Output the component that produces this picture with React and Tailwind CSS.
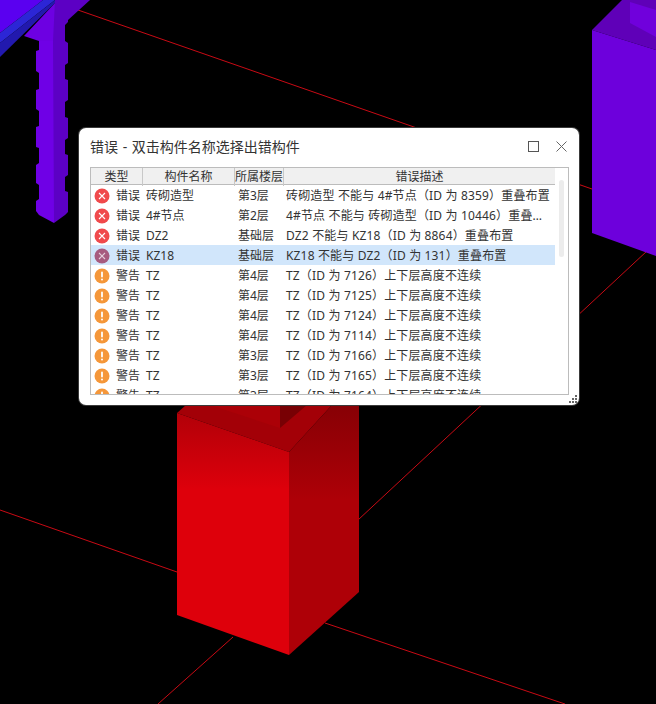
const FONT = "font-['Noto_Sans','Noto_Sans_CJK_SC',sans-serif]"

const rows = [
  { type: 'err', name: '砖砌造型', floor: '第3层', desc: '砖砌造型 不能与 4#节点（ID 为 8359）重叠布置' },
  { type: 'err', name: '4#节点', floor: '第2层', desc: '4#节点 不能与 砖砌造型（ID 为 10446）重叠布置' },
  { type: 'err', name: 'DZ2', floor: '基础层', desc: 'DZ2 不能与 KZ18（ID 为 8864）重叠布置' },
  { type: 'err', name: 'KZ18', floor: '基础层', desc: 'KZ18 不能与 DZ2（ID 为 131）重叠布置', selected: true },
  { type: 'warn', name: 'TZ', floor: '第4层', desc: 'TZ（ID 为 7126）上下层高度不连续' },
  { type: 'warn', name: 'TZ', floor: '第4层', desc: 'TZ（ID 为 7125）上下层高度不连续' },
  { type: 'warn', name: 'TZ', floor: '第4层', desc: 'TZ（ID 为 7124）上下层高度不连续' },
  { type: 'warn', name: 'TZ', floor: '第4层', desc: 'TZ（ID 为 7114）上下层高度不连续' },
  { type: 'warn', name: 'TZ', floor: '第3层', desc: 'TZ（ID 为 7166）上下层高度不连续' },
  { type: 'warn', name: 'TZ', floor: '第3层', desc: 'TZ（ID 为 7165）上下层高度不连续' },
  { type: 'warn', name: 'TZ', floor: '第3层', desc: 'TZ（ID 为 7164）上下层高度不连续' },
]

function Scene() {
  return (
    <svg className="absolute inset-0" width="656" height="704" viewBox="0 0 656 704">
      <defs>
        <linearGradient id="front" x1="0" y1="405" x2="0" y2="490" gradientUnits="userSpaceOnUse">
          <stop offset="0" stopColor="#ad0008" />
          <stop offset="1" stopColor="#de000b" />
        </linearGradient>
        <linearGradient id="side" x1="0" y1="405" x2="0" y2="500" gradientUnits="userSpaceOnUse">
          <stop offset="0" stopColor="#870005" />
          <stop offset="1" stopColor="#ae0007" />
        </linearGradient>
      </defs>

      {/* axis lines */}
      <g stroke="#c80a14" strokeWidth="1" fill="none">
        <line x1="78" y1="10" x2="592" y2="189" />
        <line x1="0" y1="510" x2="177" y2="572" />
        <line x1="325" y1="623" x2="565" y2="704" />
        <line x1="158" y1="704" x2="233" y2="637" />
        <line x1="358" y1="520" x2="647" y2="251" />
      </g>

      {/* left column and beam */}
      <polygon points="0,0 43,0 0,33" fill="#5a00f0" />
      <polygon points="43,0 55,0 55,0 0,43 0,33" fill="#2c26d6" />
      <polygon points="55,0 55,3 0,57 0,43" fill="#2219ae" />
      <polygon points="55,3 55,60 39,41 24,36" fill="#6d00e2" />
      <polygon
        points="39,41 39,50 36,51 36,71 39,73 39,89 36,90 36,109 39,111 39,126 36,127 36,147 39,148 39,163 36,165 36,183 39,185 39,199 36,201 36,211 39,215 54,223 54,41"
        fill="#6f00e6"
      />
      <polygon
        points="55,0 90,0 68,20 68,22 65,25 65,41 68,43 68,63 65,65 65,79 68,80 68,100 65,102 65,117 68,118 68,138 65,140 65,154 68,155 68,175 65,177 65,191 68,192 68,212 65,215 54,223 53,41"
        fill="#5c00c4"
      />

      {/* right column */}
      <polygon points="592,30 622,0 656,0 656,50" fill="#5f00b8" />
      <polygon points="630,2 656,10 656,37 630,23" fill="#7000dc" />
      <polygon points="592,30 656,50 656,256 592,233" fill="#6d00dc" />

      {/* red column */}
      <polygon points="177,413 186,405 332,405 289,452" fill="#a30007" />
      <polygon points="210,405 280,405 280,428" fill="#ab0007" />
      <polygon points="280,405 307,405 280,428" fill="#780004" />
      <polygon points="177,413 289,452 289,655 177,615" fill="url(#front)" />
      <polygon points="289,452 332,405 359,405 359,592 289,655" fill="url(#side)" />
    </svg>
  )
}

function StatusIcon({ type, selected }) {
  if (type === 'warn') {
    return (
      <svg width="16" height="16" viewBox="0 0 16 16" className="shrink-0">
        <circle cx="8" cy="8" r="7.5" fill="#f5973a" />
        <rect x="7.1" y="3.5" width="1.8" height="6" rx="0.9" fill="#fff" />
        <circle cx="8" cy="11.6" r="1" fill="#fff" />
      </svg>
    )
  }
  return (
    <svg width="16" height="16" viewBox="0 0 16 16" className="shrink-0">
      <circle cx="8" cy="8" r="7.5" fill={selected ? '#a75b7f' : '#f04a4c'} />
      <path d="M5 5l6 6M11 5l-6 6" stroke={selected ? '#e4cfdc' : '#fff'} strokeWidth="1.1" fill="none" />
    </svg>
  )
}

function Row({ row }) {
  return (
    <div className={`grid grid-cols-[52px_92px_49px_271px] h-5 shrink-0 items-center ${row.selected ? 'bg-[#d1e6fb]' : ''}`}>
      <div className="flex items-center gap-[6px] pl-[3px]">
        <StatusIcon type={row.type} selected={row.selected} />
        <span className="mt-[1px] whitespace-nowrap">{row.type === 'err' ? '错误' : '警告'}</span>
      </div>
      <span className="mt-[1px] pl-[3px] truncate">{row.name}</span>
      <span className="mt-[1px] pl-[3px] whitespace-nowrap">{row.floor}</span>
      <span className="mt-[1px] pl-[2px] pr-[4px] truncate tracking-[0.16px]">{row.desc}</span>
    </div>
  )
}

export default function App() {
  return (
    <div className={`relative w-[656px] h-[704px] overflow-hidden bg-black ${FONT}`}>
      <Scene />

      <div className="absolute left-[79px] top-[128px] w-[500px] h-[277px] bg-white rounded-[7px] shadow-[0_0_0_1px_#3a3a3a] flex flex-col px-[11px]">
        <div className="h-[39px] shrink-0 flex items-center justify-between pb-[2px]">
          <span className="text-[14px] text-[#333] [word-spacing:1px]">错误 - 双击构件名称选择出错构件</span>
          <div className="flex items-center gap-[17px] pr-[1px]">
            <svg width="11" height="11" viewBox="0 0 11 11">
              <rect x="0.5" y="0.5" width="10" height="10" fill="none" stroke="#555" />
            </svg>
            <svg width="11" height="11" viewBox="0 0 11 11">
              <path d="M0.5 0.5l10 10M10.5 0.5l-10 10" stroke="#666" strokeWidth="1" fill="none" />
            </svg>
          </div>
        </div>

        <div className="w-[479px] h-[228px] border border-[#bcbcbc] flex overflow-hidden text-[12px] leading-5 text-[#333]">
          <div className="w-[464px] shrink-0 flex flex-col">
            <div className="grid grid-cols-[52px_92px_49px_271px] h-[17px] shrink-0 bg-[#f0f0f0] border-b border-[#bcbcbc] leading-[18px] text-center">
              <div className="border-r border-[#c8c8c8]">类型</div>
              <div className="border-r border-[#c8c8c8]">构件名称</div>
              <div className="border-r border-[#c8c8c8] whitespace-nowrap">所属楼层</div>
              <div>错误描述</div>
            </div>
            {rows.map((row, i) => (
              <Row key={i} row={row} />
            ))}
          </div>
          <div className="flex-1 pt-[12px] pl-[4px]">
            <div className="w-[5px] h-[77px] rounded-full bg-[#ececec]" />
          </div>
        </div>

        <div className="flex-1 flex justify-end items-end pb-[1px] -mr-[10px]">
          <svg width="9" height="9" viewBox="0 0 9 9">
            <g fill="#666">
              <rect x="6" y="0" width="2" height="2" />
              <rect x="3" y="3" width="2" height="2" />
              <rect x="6" y="3" width="2" height="2" />
              <rect x="0" y="6" width="2" height="2" />
              <rect x="3" y="6" width="2" height="2" />
              <rect x="6" y="6" width="2" height="2" />
            </g>
          </svg>
        </div>
      </div>
    </div>
  )
}
